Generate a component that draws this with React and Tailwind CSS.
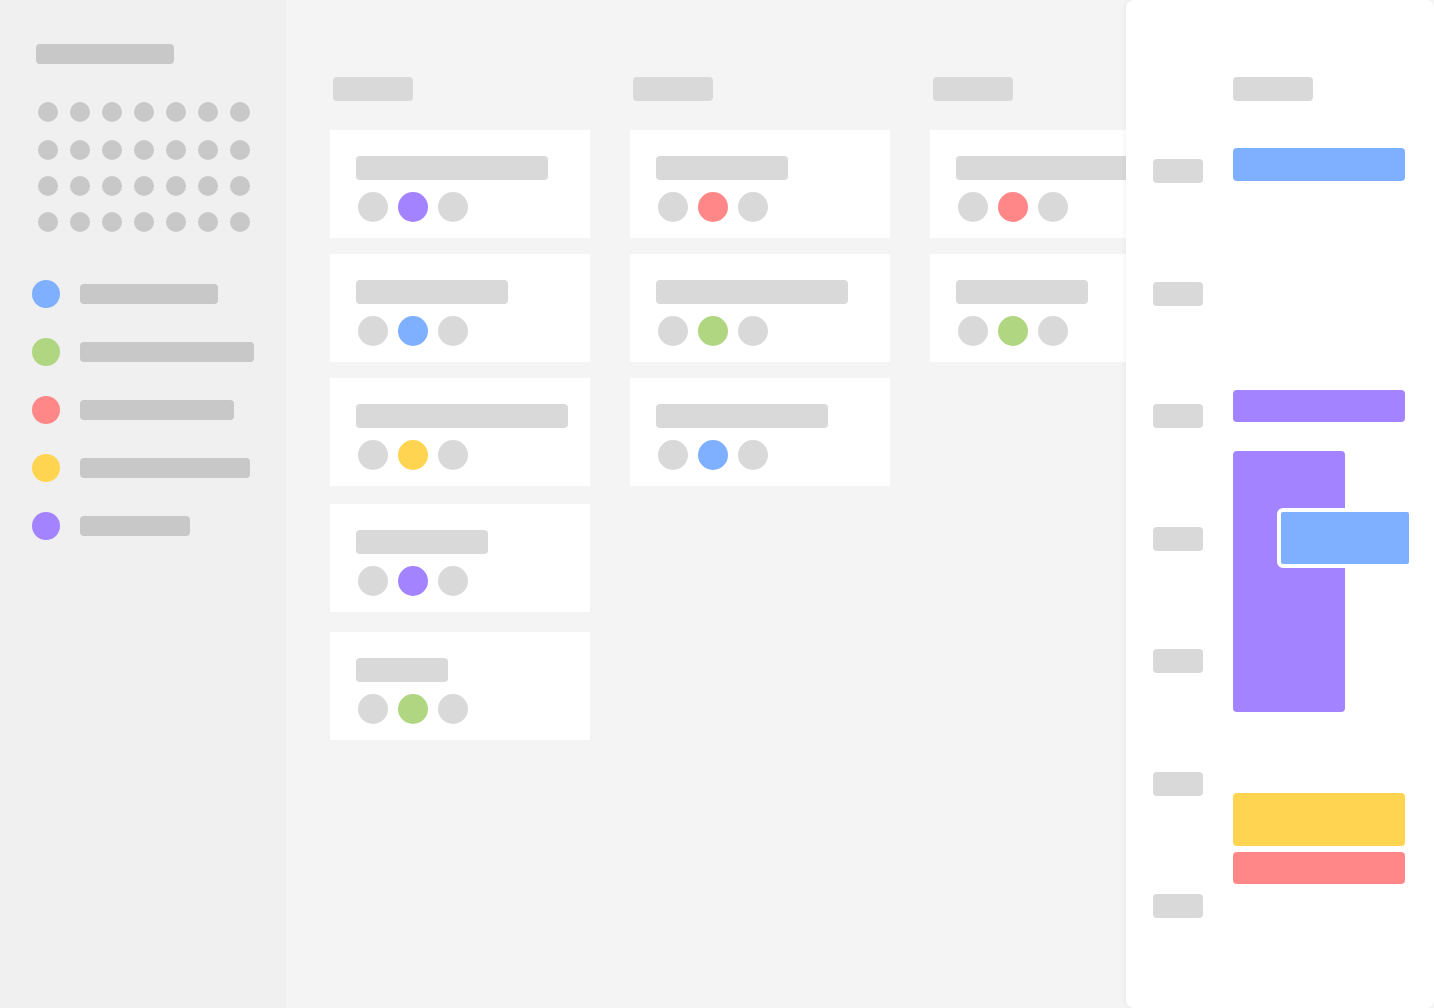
import React from 'react';

const C = {
  blue: 'bg-[#7fafff]',
  green: 'bg-[#b0d682]',
  red: 'bg-[#ff8787]',
  yellow: 'bg-[#ffd451]',
  purple: 'bg-[#a383ff]',
};

const legend = [
  { c: C.blue, w: 'w-[138px]' },
  { c: C.green, w: 'w-[174px]' },
  { c: C.red, w: 'w-[154px]' },
  { c: C.yellow, w: 'w-[170px]' },
  { c: C.purple, w: 'w-[110px]' },
];

const columns = [
  [
    { w: 'w-[192px]', c: C.purple, mt: 'mt-0' },
    { w: 'w-[152px]', c: C.blue, mt: 'mt-4' },
    { w: 'w-[212px]', c: C.yellow, mt: 'mt-4' },
    { w: 'w-[132px]', c: C.purple, mt: 'mt-[18px]' },
    { w: 'w-[92px]', c: C.green, mt: 'mt-5' },
  ],
  [
    { w: 'w-[132px]', c: C.red, mt: 'mt-0' },
    { w: 'w-[192px]', c: C.green, mt: 'mt-4' },
    { w: 'w-[172px]', c: C.blue, mt: 'mt-4' },
  ],
  [
    { w: 'w-[212px]', c: C.red, mt: 'mt-0' },
    { w: 'w-[132px]', c: C.green, mt: 'mt-4' },
  ],
];

function Card({ w, c, mt }) {
  return (
    <div className={`${mt} w-[260px] h-[108px] bg-white pl-[26px] pt-[26px]`}>
      <div className={`${w} h-6 rounded bg-[#d9d9d9]`} />
      <div className="mt-3 ml-[2px] flex gap-[10px]">
        <div className="w-[30px] h-[30px] rounded-full bg-[#d9d9d9]" />
        <div className={`w-[30px] h-[30px] rounded-full ${c}`} />
        <div className="w-[30px] h-[30px] rounded-full bg-[#d9d9d9]" />
      </div>
    </div>
  );
}

export default function App() {
  return (
    <div className="flex h-[1008px] w-[1434px] overflow-hidden bg-[#f4f4f4]">
      {/* sidebar */}
      <div className="w-[286px] shrink-0 bg-[#f0f0f0] pt-[44px]">
        <div className="ml-9 w-[138px] h-5 rounded bg-[#c8c8c8]" />
        <div className="ml-[38px] mt-[38px] flex flex-col">
          {[0, 1, 2, 3].map(r => (
            <div key={r} className={`flex gap-3 ${r === 0 ? 'mb-[18px]' : 'mb-4'}`}>
              {[0, 1, 2, 3, 4, 5, 6].map(i => (
                <div key={i} className="w-5 h-5 rounded-full bg-[#c8c8c8]" />
              ))}
            </div>
          ))}
        </div>
        <div className="ml-8 mt-8 flex flex-col gap-[30px]">
          {legend.map((l, i) => (
            <div key={i} className="flex items-center gap-5">
              <div className={`w-7 h-7 rounded-full ${l.c}`} />
              <div className={`${l.w} h-5 rounded bg-[#c8c8c8]`} />
            </div>
          ))}
        </div>
      </div>

      {/* board */}
      <div className="flex-1 overflow-hidden pl-[44px] pt-[77px]">
        <div className="flex gap-10">
          {columns.map((col, ci) => (
            <div key={ci} className="w-[260px] shrink-0">
              <div className="ml-[3px] w-20 h-6 rounded bg-[#d9d9d9]" />
              <div className="mt-[29px] flex flex-col">
                {col.map((card, i) => (
                  <Card key={i} {...card} />
                ))}
              </div>
            </div>
          ))}
        </div>
      </div>

      {/* calendar panel */}
      <div className="relative z-10 w-[308px] shrink-0 bg-white rounded-lg shadow-[-2px_0_4px_rgba(0,0,0,0.04)] flex">
        <div className="pl-[27px] pt-[159px] flex flex-col gap-[98.5px]">
          {[0, 1, 2, 3, 4, 5, 6].map(i => (
            <div key={i} className="w-[50px] h-6 rounded bg-[#d9d9d9]" />
          ))}
        </div>
        <div className="pl-[30px] pt-[77px]">
          <div className="w-20 h-6 rounded bg-[#d9d9d9]" />
        </div>
        <div className="absolute left-[107px] top-[148px] w-[172px] h-[33px] rounded bg-[#7fafff]" />
        <div className="absolute left-[107px] top-[390px] w-[172px] h-[32px] rounded bg-[#a383ff]" />
        <div className="absolute left-[107px] top-[451px] w-[112px] h-[261px] rounded bg-[#a383ff]" />
        <div className="absolute left-[151px] top-[508px] w-[136px] h-[60px] rounded-md border-4 border-white bg-[#7fafff]" />
        <div className="absolute left-[107px] top-[793px] w-[172px] h-[53px] rounded bg-[#ffd451]" />
        <div className="absolute left-[107px] top-[852px] w-[172px] h-[32px] rounded bg-[#ff8787]" />
      </div>
    </div>
  );
}
